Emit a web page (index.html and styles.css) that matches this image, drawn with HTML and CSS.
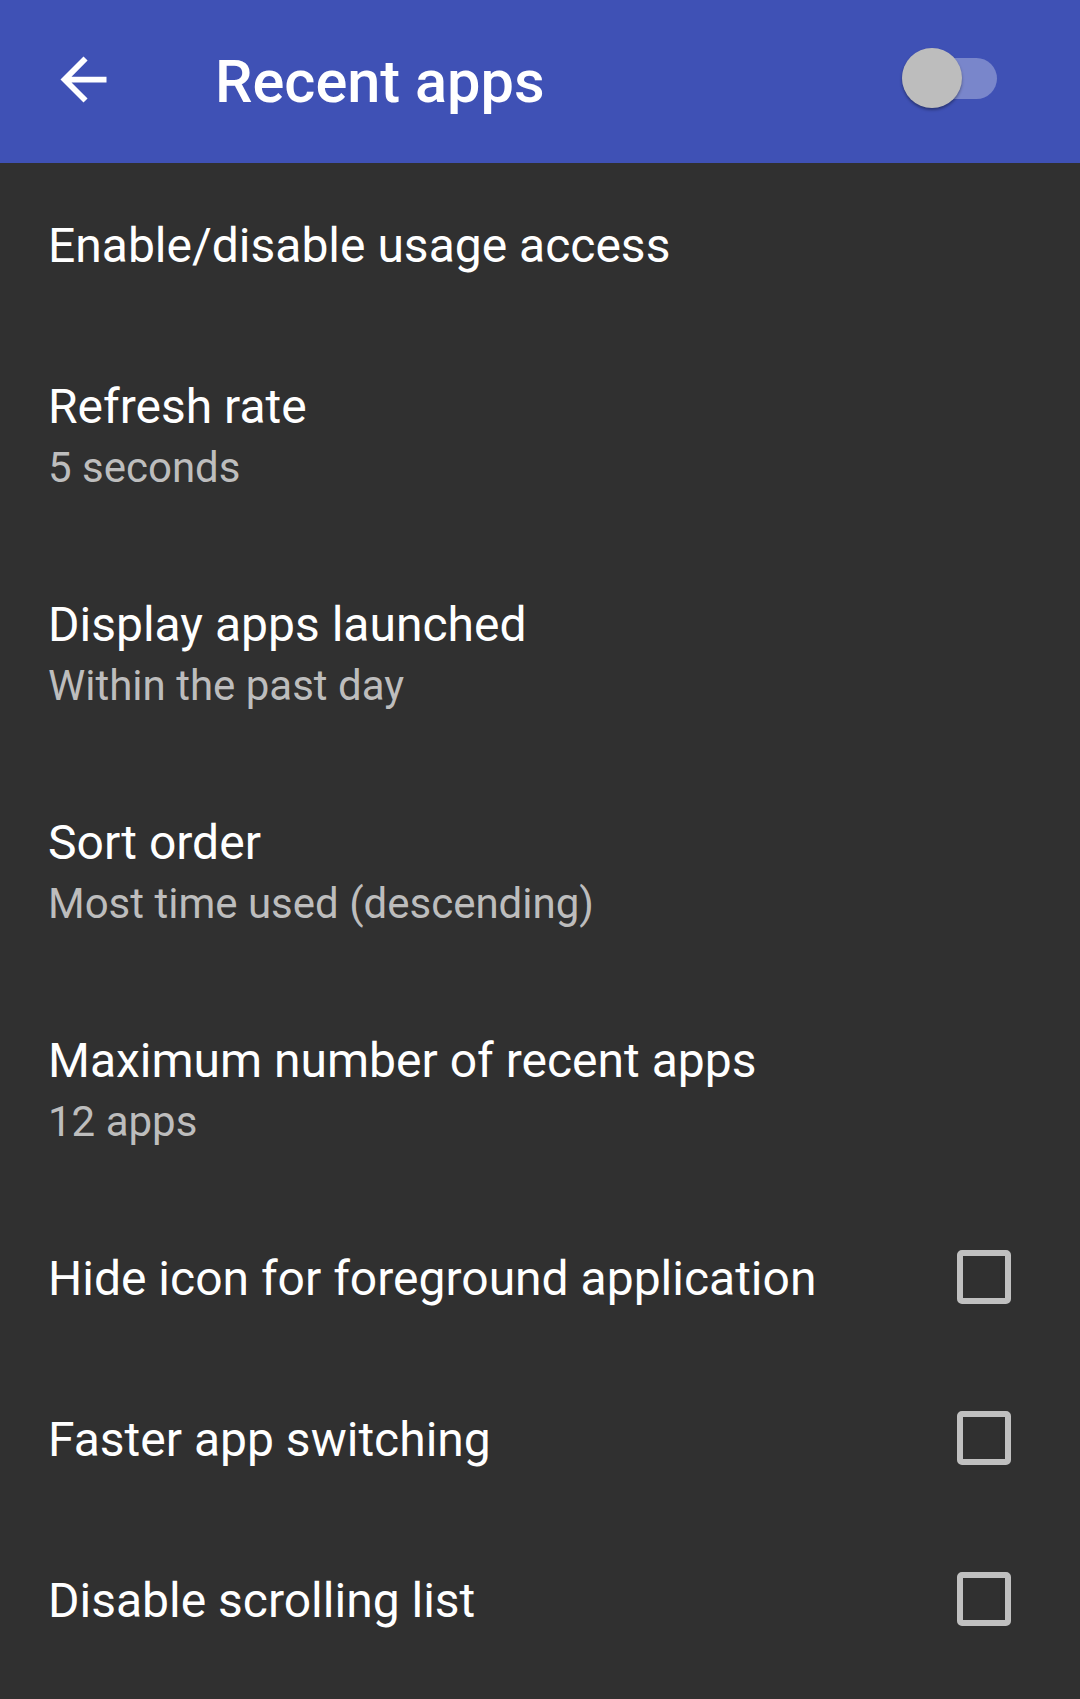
FILE: index.html
```html
<!DOCTYPE html>
<html lang="en">
<head>
<meta charset="utf-8">
<title>Recent apps</title>
<link rel="stylesheet" href="styles.css">
</head>
<body>
<header class="appbar">
  <svg class="back" viewBox="0 0 24 24" aria-hidden="true"><path d="M20 11H7.83l5.59-5.59L12 4l-8 8 8 8 1.41-1.41L7.83 13H20v-2z" fill="#fff"/></svg>
  <h1 class="title">Recent apps</h1>
  <div class="switch"><span class="track"></span><span class="thumb"></span></div>
</header>
<main class="list">
  <div class="row single"><div class="label">Enable/disable usage access</div></div>
  <div class="row double"><div class="label">Refresh rate</div><div class="summary">5 seconds</div></div>
  <div class="row double"><div class="label">Display apps launched</div><div class="summary">Within the past day</div></div>
  <div class="row double"><div class="label">Sort order</div><div class="summary">Most time used (descending)</div></div>
  <div class="row double"><div class="label">Maximum number of recent apps</div><div class="summary">12 apps</div></div>
  <div class="row single check"><div class="label">Hide icon for foreground application</div><span class="box"></span></div>
  <div class="row single check"><div class="label">Faster app switching</div><span class="box"></span></div>
  <div class="row single check"><div class="label">Disable scrolling list</div><span class="box"></span></div>
</main>
</body>
</html>
```
FILE: styles.css
```css
html, body {
  margin: 0;
  padding: 0;
}
body {
  background: #303030;
  font-family: Roboto, "Noto Sans", "Liberation Sans", sans-serif;
  color: #fff;
  width: 1080px;
  height: 1699px;
  overflow: hidden;
}
.appbar {
  height: 163px;
  background: #3f51b5;
  display: flex;
  align-items: center;
  padding-left: 49px;
  box-sizing: border-box;
  position: relative;
  z-index: 1;
}
.back {
  width: 69px;
  height: 69px;
  flex: none;
  margin-top: -5px;
}
.title {
  margin: 0 0 0 97px;
  font-size: 59.5px;
  font-weight: 500;
  line-height: 68px;
  color: #fff;
}
.switch {
  margin-left: auto;
  margin-right: 83px;
  width: 95px;
  height: 60px;
  position: relative;
  margin-top: -7px;
}
.track {
  position: absolute;
  left: 0;
  right: 0;
  top: 10px;
  height: 41px;
  border-radius: 21px;
  background: #7986cb;
}
.thumb {
  position: absolute;
  left: 0;
  top: 0;
  width: 60px;
  height: 60px;
  border-radius: 50%;
  background: #bdbdbd;
  box-shadow: 0 2px 3px rgba(0, 0, 0, 0.35);
}
.list {
  display: flex;
  flex-direction: column;
}
.row {
  box-sizing: border-box;
  padding: 0 48px;
  display: flex;
}
.row.single {
  height: 161px;
  align-items: center;
  padding-top: 4px;
}
.row.double {
  height: 218px;
  flex-direction: column;
  justify-content: center;
  padding-top: 5px;
}
.row.check {
  padding-right: 69px;
}
.label {
  font-size: 48px;
  line-height: 54px;
  color: #fff;
  flex: 1;
}
.row.double .label {
  flex: none;
}
.summary {
  font-size: 42px;
  line-height: 48px;
  margin-top: 10px;
  color: #bdbdbd;
}
.box {
  width: 54px;
  height: 54px;
  box-sizing: border-box;
  border: 6px solid #c0c0c0;
  border-radius: 5px;
  flex: none;
  margin-top: -4px;
}
```
